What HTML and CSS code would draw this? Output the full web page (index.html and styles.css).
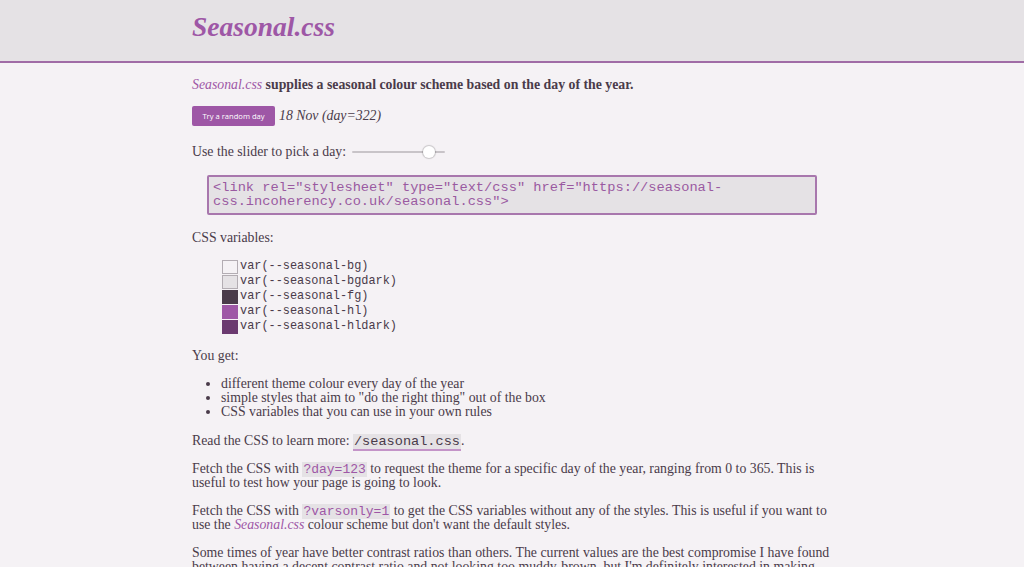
FILE: index.html
```html
<!DOCTYPE html>
<html lang="en">
<head>
<meta charset="utf-8">
<title>Seasonal.css</title>
<link rel="stylesheet" href="styles.css">
</head>
<body>
<header class="site-header">
  <div class="wrap">
    <h1 class="title">Seasonal.css</h1>
  </div>
</header>
<main class="wrap content">
  <p class="intro"><em class="brand">Seasonal.css</em> supplies a seasonal colour scheme based on the day of the year.</p>
  <div class="day-row">
    <button class="btn">Try a random day</button>
    <em class="day-label">18 Nov (day=322)</em>
  </div>
  <div class="slider-row">
    <span>Use the slider to pick a day:</span>
    <span class="slider"><span class="track"></span><span class="thumb"></span></span>
  </div>
  <pre class="code-box">&lt;link rel="stylesheet" type="text/css" href="https://seasonal-
css.incoherency.co.uk/seasonal.css"&gt;</pre>
  <p>CSS variables:</p>
  <ul class="vars">
    <li><span class="sw sw-bg"></span>var(--seasonal-bg)</li>
    <li><span class="sw sw-bgdark"></span>var(--seasonal-bgdark)</li>
    <li><span class="sw sw-fg"></span>var(--seasonal-fg)</li>
    <li><span class="sw sw-hl"></span>var(--seasonal-hl)</li>
    <li><span class="sw sw-hldark"></span>var(--seasonal-hldark)</li>
  </ul>
  <p>You get:</p>
  <ul class="bullets">
    <li>different theme colour every day of the year</li>
    <li>simple styles that aim to "do the right thing" out of the box</li>
    <li>CSS variables that you can use in your own rules</li>
  </ul>
  <p>Read the CSS to learn more: <a class="code-link" href="#">/seasonal.css</a>.</p>
  <p>Fetch the CSS with <code class="ic">?day=123</code> to request the theme for a specific day of the year, ranging from 0 to 365. This is useful to test how your page is going to look.</p>
  <p>Fetch the CSS with <code class="ic">?varsonly=1</code> to get the CSS variables without any of the styles. This is useful if you want to use the <em class="brand">Seasonal.css</em> colour scheme but don't want the default styles.</p>
  <p>Some times of year have better contrast ratios than others. The current values are the best compromise I have found between having a decent contrast ratio and not looking too muddy-brown, but I'm definitely interested in making improvements if you have suggestions.</p>
</main>
</body>
</html>
```
FILE: styles.css
```css
:root {
  --bg: #f5f2f5;
  --bgdark: #e5e2e5;
  --fg: #4a3b4a;
  --hl: #9e57a6;
  --hldark: #6b3a70;
}
html, body {
  margin: 0;
  padding: 0;
  background: var(--bg);
  color: var(--fg);
  font-family: "Liberation Serif", "Times New Roman", serif;
  font-size: 13.8px;
  line-height: 14px;
}
.wrap {
  width: 640px;
  margin: 0 auto;
}
.site-header {
  background: var(--bgdark);
  border-bottom: 2px solid #a06ca6;
  height: 61px;
}
.title {
  margin: 0;
  padding-top: 11px;
  font-size: 27.5px;
  line-height: 32px;
  font-style: italic;
  font-weight: bold;
  color: var(--hl);
}
.content {
  padding-top: 15px;
}
p {
  margin: 0 0 14px;
}
.intro {
  font-weight: bold;
  margin-bottom: 14px;
}
.brand {
  color: var(--hl);
  font-weight: normal;
}
.day-row {
  display: flex;
  align-items: center;
  gap: 4px;
  height: 20px;
  margin-bottom: 19px;
}
.btn {
  background: var(--hl);
  color: #fff;
  border: none;
  border-radius: 2px;
  font-family: "Open Sans", "Liberation Sans", sans-serif;
  font-size: 7.6px;
  width: 83px;
  height: 20px;
  padding: 0;
}
.day-label {
  font-size: 13.8px;
}
.slider-row {
  display: flex;
  align-items: center;
  gap: 6px;
  height: 14px;
  margin-bottom: 16px;
}
.slider {
  position: relative;
  width: 93px;
  height: 12px;
  display: inline-block;
}
.track {
  position: absolute;
  left: 0; right: 0; top: 5px;
  height: 2px;
  background: #c8c4c8;
  border-radius: 1px;
}
.thumb {
  position: absolute;
  left: 71px; top: 0;
  width: 12px; height: 12px;
  border-radius: 50%;
  background: #fff;
  box-shadow: 0 0 1px 1px rgba(0,0,0,0.18);
}
.code-box {
  margin: 0 15px 16px 15px;
  padding: 4px 4px;
  border: 2px solid #a877ad;
  border-radius: 2px;
  background: var(--bgdark);
  color: #9a5aa1;
  font-family: "Liberation Mono", "Courier New", monospace;
  font-size: 13.7px;
  line-height: 14px;
  white-space: pre;
}
.vars {
  list-style: none;
  margin: 0 0 15px;
  padding: 0 0 0 30px;
  font-family: "Liberation Mono", "Courier New", monospace;
  font-size: 11.9px;
  line-height: 15px;
}
.vars li {
  display: flex;
  align-items: center;
  gap: 2px;
  height: 15px;
}
.sw {
  display: inline-block;
  width: 14px;
  height: 12px;
  border: 1px solid #b3adb3;
}
.sw-bg { background: var(--bg); }
.sw-bgdark { background: var(--bgdark); }
.sw-fg { background: var(--fg); border-color: var(--fg); }
.sw-hl { background: var(--hl); border-color: var(--hl); }
.sw-hldark { background: var(--hldark); border-color: var(--hldark); }
.bullets {
  margin: 0 0 15px;
  padding-left: 29px;
  list-style: disc;
}
.code-link {
  font-family: "Liberation Mono", "Courier New", monospace;
  font-size: 13.6px;
  line-height: 0;
  color: var(--fg);
  text-decoration: none;
  border-bottom: 2px solid #c494c8;
  background: var(--bgdark);
  padding: 0 1px;
}
.ic {
  font-family: "Liberation Mono", "Courier New", monospace;
  font-size: 13px;
  line-height: 0;
  color: var(--hl);
  background: var(--bgdark);
  padding: 0 1px;
}
```
